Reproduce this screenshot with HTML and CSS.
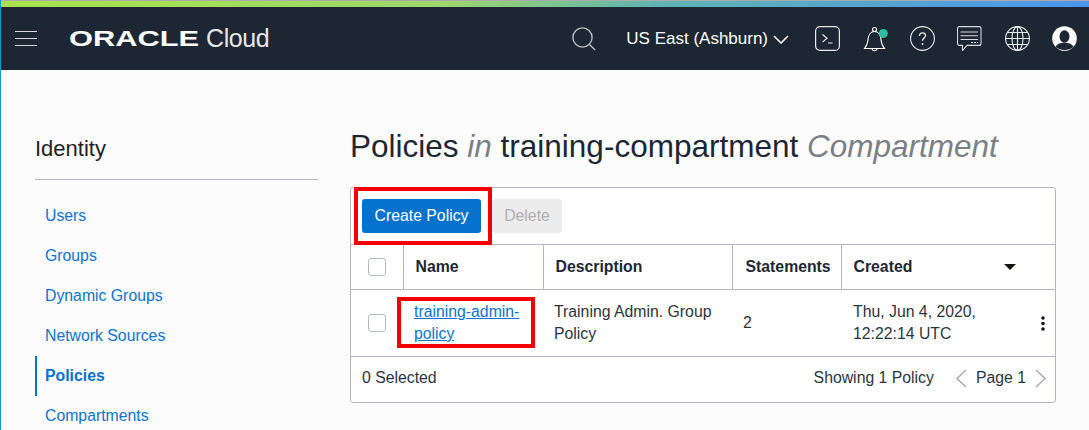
FILE: index.html
```html
<!DOCTYPE html>
<html lang="en">
<head>
    <meta charset="UTF-8">
    <title>Policies - Oracle Cloud</title>
    <link rel="stylesheet" href="styles.css">
</head>
<body>
    <div class="topline"></div>
    <header class="navbar">
        <div class="burger"><span></span><span></span><span></span></div>
        <div class="logo"><span class="logo-oracle">ORACLE</span><span class="logo-cloud">Cloud</span></div>
        <div class="nav-right">
            <svg class="search" width="24" height="24" viewBox="0 0 24 24" fill="none" stroke="#b9bdc2" stroke-width="1.4"><circle cx="10.5" cy="10.5" r="9.6"/><path d="M17.5 17.5l5.6 5.6"/></svg>
            <span class="region">US East (Ashburn)</span>
            <svg class="chevron" width="16" height="9" viewBox="0 0 16 9" fill="none" stroke="#fff" stroke-width="1.6"><path d="M1 1l7 7 7-7"/></svg>
            <div class="nav-icons">
                <svg width="25" height="25" viewBox="0 0 25 25" fill="none" stroke="#e8e9eb" stroke-width="1.2"><rect x=".6" y=".6" width="23.8" height="23.8" rx="4.5"/><path d="M7.5 8.5l4.5 3.8-4.5 3.8M13 17h4.5"/></svg>
                <svg class="bell" width="25" height="25" viewBox="0 0 25 25" fill="none" stroke="#fff" stroke-width="1.1"><path d="M2.500 22.500c2.500-3 3.300-5.500 3.600-9.500.3-4.500 3-7.500 6.400-7.500s6.100 3 6.400 7.500c.3 4 1.100 6.500 3.600 9.500z"/><circle cx="12.500" cy="3.500" r="2"/><path d="M10 22.500c.2 3 4.800 3 5 0"/><circle cx="21.300" cy="7.500" r="4.500" fill="#2ebd9f" stroke="none"/></svg>
                <svg width="25" height="25" viewBox="0 0 25 25" fill="none" stroke="#e8e9eb" stroke-width="1.1"><circle cx="12.500" cy="12.500" r="11.900"/><path d="M9.500 10c0-2 1.300-3.200 3-3.200s3 1.100 3 2.800c0 2.500-3 2.500-3 5.200" stroke-width="1.300"/><circle cx="12.500" cy="18" r=".9" fill="#e8e9eb" stroke="none"/></svg>
                <svg width="25" height="25" viewBox="0 0 25 25" fill="none" stroke="#d8dadd" stroke-width="1.1"><path d="M2.500.6h19.500c1.200 0 2 .8 2 2v14.800c0 1.200-.8 2-2 2H10L5.500 24.500V19.400h-3c-1.200 0-2-.8-2-2V2.600c0-1.200.8-2 2-2z"/><path d="M3.500 6h17.500M3.500 9.700h17.500M3.500 13.500h17.500" /><path d="M14 16.500h7" stroke-dasharray="2 1"/></svg>
                <svg width="25" height="25" viewBox="0 0 25 25" fill="none" stroke="#e8e9eb" stroke-width="1.100"><circle cx="12.500" cy="12.500" r="11.900"/><ellipse cx="12.500" cy="12.500" rx="5.500" ry="11.900"/><path d="M12.500.6v23.800M.6 12.500h23.800M2.300 6.500h20.400M2.300 18.500h20.400"/></svg>
                <svg width="25" height="25" viewBox="0 0 25 25"><circle cx="12.500" cy="12.500" r="12.300" fill="#fff"/><ellipse cx="12.500" cy="10.500" rx="5" ry="6.200" fill="#1c2733"/><path d="M3.500 21c1.500-3.500 5-4.300 9-4.300s7.500.8 9 4.300c-4.500 4-13.500 4-18 0z" fill="#1c2733"/></svg>
            </div>
        </div>
    </header>

    <div class="page">
        <aside class="sidebar">
            <h2>Identity</h2>
            <ul class="side-menu">
                <li><a>Users</a></li>
                <li><a>Groups</a></li>
                <li><a>Dynamic Groups</a></li>
                <li><a>Network Sources</a></li>
                <li class="active"><a>Policies</a></li>
                <li><a>Compartments</a></li>
            </ul>
        </aside>

        <main class="content">
            <h1>Policies <em>in</em> training-compartment <em>Compartment</em></h1>
            <div class="card">
                <div class="toolbar">
                    <button class="btn btn-primary">Create Policy</button>
                    <button class="btn btn-disabled">Delete</button>
                </div>
                <table class="grid">
                    <colgroup>
                        <col class="col-check"><col class="col-name"><col class="col-desc"><col class="col-stat"><col class="col-created">
                    </colgroup>
                    <thead>
                        <tr>
                            <th><span class="checkbox"></span></th>
                            <th>Name</th>
                            <th>Description</th>
                            <th class="th-stat">Statements</th>
                            <th class="th-last"><div class="th-created">Created<span class="caret"></span></div></th>
                        </tr>
                    </thead>
                    <tbody>
                        <tr>
                            <td><span class="checkbox"></span></td>
                            <td class="td-name"><a class="policy-link">training-admin-policy</a></td>
                            <td>Training Admin. Group Policy</td>
                            <td>2</td>
                            <td class="td-last">
                                <div class="td-created">
                                    <span>Thu, Jun 4, 2020,<br>12:22:14 UTC</span>
                                    <svg width="4" height="15" viewBox="0 0 4 15" fill="#161513"><circle cx="2" cy="2" r="1.800"/><circle cx="2" cy="7.500" r="1.800"/><circle cx="2" cy="13" r="1.800"/></svg>
                                </div>
                            </td>
                        </tr>
                    </tbody>
                </table>
                <div class="card-foot">
                    <span>0 Selected</span>
                    <div class="pager">
                        <span class="showing">Showing 1 Policy</span>
                        <svg width="12" height="19" viewBox="0 0 12 19" fill="none" stroke="#aaa" stroke-width="1.500"><path d="M11 1L2 9.500l9 8.500"/></svg>
                        <span>Page 1</span>
                        <svg width="12" height="19" viewBox="0 0 12 19" fill="none" stroke="#aaa" stroke-width="1.500"><path d="M1 1l9 8.500L1 18"/></svg>
                    </div>
                </div>
                <div class="mark mark-create"></div>
                <div class="mark mark-link"></div>
            </div>
        </main>
    </div>
</body>
</html>
```

FILE: styles.css
```css
* {
    margin: 0; padding: 0;
    box-sizing: border-box;
}
html, body { height: 100%; overflow: hidden; }
body {
    background: #fcfcfc;
    border-left: 1px solid #0a9fc9;
    color: #161513;
    font-family: "Liberation Sans", Arial, sans-serif;
    font-size: 15.8px;
}

/* top bar */
.topline {
    height: 7px;
    border-top: 1px solid #aaa;
    background: linear-gradient(90deg, #a9e34b 0%, #9fd86a 40%, #62b3b0 60%, #4a96ee 100%);
}
.navbar {
    display: flex;
    align-items: center;
    height: 63px;
    background: #1c2733;
    color: #fff;
}
.burger {
    width: 22px;
    margin-left: 14px;
    display: flex;
    flex-direction: column;
    gap: 6px;
}
.burger span {
    height: 1px;
    background: #d5d7da;
}
.logo {
    display: flex;
    align-items: center;
    margin-left: 32px;
}
.logo-oracle {
    display: inline-block;
    width: 137px;
    font-size: 22px;
    font-weight: bold;
    transform: scaleX(1.4);
    transform-origin: left center;
}
.logo-cloud {
    font-size: 25px;
    color: #e6e7e9;
    letter-spacing: -.4px;
}
.nav-right {
    margin-left: auto;
    margin-right: 12px;
    display: flex;
    align-items: center;
}
.search { margin-right: 30px; }
.region { font-size: 17px; }
.chevron { margin: 2px 26px 0 5px; }
.nav-icons {
    display: flex;
    gap: 22.400px;
}
.bell { overflow: visible; }

/* layout */
.page {
    display: flex;
    padding: 57px 0 0 34px;
}
.sidebar {
    width: 283px;
    flex-shrink: 0;
}
.sidebar h2 {
    font-size: 22px;
    font-weight: normal;
    line-height: 44px;
    height: 53px;
    border-bottom: 1px solid #b4b8c0;
    color: #1e2125;
}
.side-menu {
    list-style: none;
    margin-top: 16px;
}
.side-menu li {
    height: 40px;
    line-height: 40px;
    padding-left: 10px;
    color: #0f73cc;
}
.side-menu .active {
    border-left: 2px solid #0572ce;
    padding-left: 8px;
    font-weight: bold;
    color: #0572ce;
}

.content {
    margin-left: 32px;
    width: 706px;
}
.content h1 {
    font-size: 31.500px;
    font-weight: normal;
    line-height: 38px;
    margin-bottom: 22px;
    white-space: nowrap;
    color: #1c2733;
}
.content h1 em {
    color: #7b7f85;
}

/* card */
.card {
    position: relative;
    width: 706px;
    height: 216px;
    background: #fff;
    border: 1px solid #b4b8c0;
    border-radius: 3px;
}
.toolbar {
    height: 56px;
    padding: 11px 0 0 11px;
    display: flex;
    gap: 11px;
}
.btn {
    height: 34px;
    border: 0;
    border-radius: 3px;
    font: 15.8px "Liberation Sans", Arial, sans-serif;
}
.btn-primary {
    width: 119px;
    background: #0572ce;
    color: #fff;
}
.btn-disabled {
    width: 70px;
    background: #ececec;
    color: #b0b0b0;
}
.grid {
    width: 100%;
    table-layout: fixed;
    border-collapse: collapse;
}
.col-check { width: 52px; }
.col-name { width: 140px; }
.col-desc { width: 189px; }
.col-stat { width: 109px; }
.grid th {
    height: 45px;
    border-top: 1px solid #b4b8c0;
    border-bottom: 1px solid #b4b8c0;
    border-left: 1px solid #b4b8c0;
    padding: 0 11px 0 12px;
    text-align: left;
    font-size: 15.8px;
    color: #1c2733;
}
.grid th:first-child { border-left: 0; padding: 0 0 0 17px; }
.grid th.th-stat { padding: 0 0 0 13px; }
.grid th.th-last { padding-left: 12px; }
.grid td {
    height: 67px;
    border-bottom: 1px solid #b4b8c0;
    padding: 0 11px;
    line-height: 22px;
    vertical-align: middle;
    color: #2c3440;
}
.grid td:first-child { padding: 0 0 0 17px; }
.grid td.td-name { padding-right: 16px; }
.grid td.td-last { padding-left: 12px; }
.th-created {
    display: flex;
    justify-content: space-between;
    align-items: center;
    padding-right: 28px;
}
.caret {
    width: 0; height: 0;
    border-left: 6px solid transparent;
    border-right: 6px solid transparent;
    border-top: 6px solid #161513;
}
.td-created {
    display: flex;
    justify-content: space-between;
    align-items: center;
    margin-right: -1px;
}
.checkbox {
    display: block;
    width: 18px;
    height: 18px;
    background: #fff;
    border: 1px solid #b4b8c0;
    border-radius: 3px;
}
.policy-link {
    color: #0f73cc;
    text-decoration: underline;
}
.card-foot {
    height: 46px;
    padding: 0 8px 4px 11px;
    display: flex;
    justify-content: space-between;
    align-items: center;
    color: #2c3440;
}
.pager {
    display: flex;
    align-items: center;
    gap: 9px;
}
.showing { margin-right: 12px; }

/* red annotation boxes */
.mark {
    position: absolute;
    border: 4px solid #f50000;
}
.mark-create {
    left: 3px; top: -1px;
    width: 138px;
    height: 58px;
}
.mark-link {
    left: 46px; top: 109px;
    width: 138px;
    height: 51px;
}
```
